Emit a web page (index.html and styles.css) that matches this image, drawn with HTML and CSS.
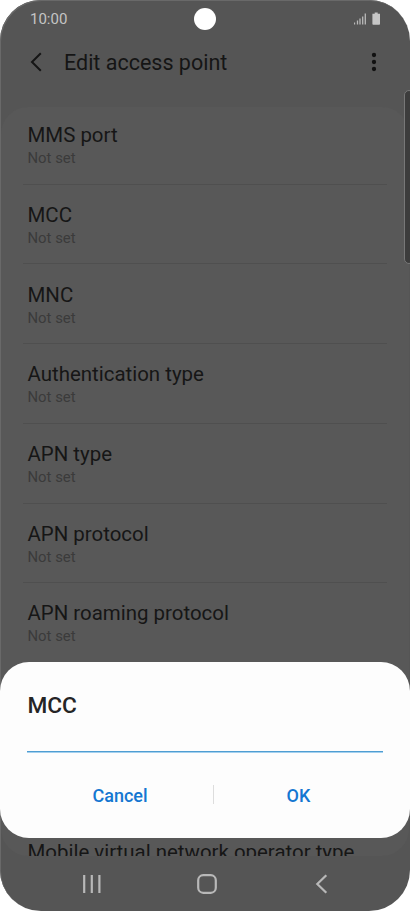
FILE: index.html
```html
<!DOCTYPE html>
<html lang="en">
<head>
<meta charset="utf-8">
<title>Edit access point</title>
<link rel="stylesheet" href="styles.css">
</head>
<body>
<div class="phone">
  <div class="status">
    <span class="time">10:00</span>
    <svg class="status-icons" width="28" height="14" viewBox="0 0 28 14">
      <path d="M.5 12.5v-2M3.5 12.5V8.5M6 12.5V6.5M8.7 12.5V4.5M11.3 12.5V1.5" class="signal"/>
      <path d="M20.7 .5h3v1.2H26v10.2a.8.8 0 0 1-.8.8h-6a.8.8 0 0 1-.8-.8V1.7h2.3z" class="fill"/>
    </svg>
  </div>
  <header class="header">
    <svg class="back" width="12" height="20" viewBox="0 0 12 20"><path d="M10.8 1.3 2 10l8.8 8.7"/></svg>
    <h1>Edit access point</h1>
    <svg class="more" width="6" height="20" viewBox="0 0 6 20"><circle cx="3" cy="3" r="2.15"/><circle cx="3" cy="10" r="2.15"/><circle cx="3" cy="17" r="2.15"/></svg>
  </header>
  <main class="card">
    <div class="row"><div class="name">MMS port</div><div class="value">Not set</div></div>
    <div class="row"><div class="name">MCC</div><div class="value">Not set</div></div>
    <div class="row"><div class="name">MNC</div><div class="value">Not set</div></div>
    <div class="row"><div class="name">Authentication type</div><div class="value">Not set</div></div>
    <div class="row"><div class="name">APN type</div><div class="value">Not set</div></div>
    <div class="row"><div class="name">APN protocol</div><div class="value">Not set</div></div>
    <div class="row"><div class="name">APN roaming protocol</div><div class="value">Not set</div></div>
    <div class="row"></div>
    <div class="row"></div>
    <div class="row"><div class="name">Mobile virtual network operator type</div></div>
  </main>
  <nav class="nav">
    <svg width="20" height="20" viewBox="0 0 20 20"><path d="M2.2 1v18M9.8 1v18M17.4 1v18"/></svg>
    <svg width="20" height="20" viewBox="0 0 20 20"><rect x="1.2" y="1.2" width="17.6" height="17.6" rx="5"/></svg>
    <svg width="20" height="20" viewBox="0 0 20 20"><path d="M15.3 1.3 6.3 10l9 8.7"/></svg>
  </nav>
  <div class="camera"></div>
  <div class="edge"></div>
  <section class="dialog">
    <h2>MCC</h2>
    <div class="field"></div>
    <div class="actions"><span>Cancel</span><i class="split"></i><span>OK</span></div>
  </section>
</div>
</body>
</html>
```
FILE: styles.css
```css
* { box-sizing: border-box; }
body { margin: 0; background: #fff; font-family: Roboto, sans-serif; }
.phone {
  position: relative;
  width: 410px;
  height: 911px;
  display: flex;
  flex-direction: column;
  overflow: hidden;
  border-radius: 41px;
  background: #555;
  box-shadow: inset 1px 1px 0 #696969;
}
.status {
  height: 38px;
  padding: 0 28px 0 30px;
  display: flex;
  align-items: center;
  justify-content: space-between;
}
.time { font-size: 15px; line-height: 18px; color: #c4c4c4; }
.signal { stroke: #b9b9b9; stroke-width: 1.3; fill: none; }
.fill { fill: #c6c6c6; }
.header {
  height: 69px;
  padding: 14px 33.5px 0 29px;
  display: flex;
  align-items: flex-start;
}
.back { margin: -0.5px 22px 0 1px; fill: none; stroke: #151515; stroke-width: 2; }
h1 { margin: -2px 0 0; flex: 1; font-size: 21.5px; line-height: 26px; font-weight: 400; color: #151515; }
.more { fill: #111; }
.card {
  height: 749px;
  margin: 0 1px;
  padding: 0 22px;
  overflow: hidden;
  border-radius: 27px;
  background: #585858;
}
.row { height: 79.7px; padding: 17.2px 4.5px 0; border-bottom: 1px solid #4f4f4f; }
.row:first-child { height: 77.8px; padding-top: 15.3px; }
.name { font-size: 20.45px; line-height: 26px; color: #161616; white-space: nowrap; }
.value { font-size: 14.9px; line-height: 21.8px; color: #3b3b3b; }
.nav {
  height: 55px;
  padding: 0 79px 0 82px;
  display: flex;
  align-items: center;
  justify-content: space-between;
}
.nav svg { fill: none; stroke: #b8b8b8; stroke-width: 2.2; }
.camera {
  position: absolute;
  left: 194px;
  top: 8px;
  width: 22px;
  height: 22px;
  border-radius: 50%;
  background: #fff;
}
.edge {
  position: absolute;
  left: 404px;
  top: 90px;
  width: 10px;
  height: 174px;
  border: 1px solid #777;
  border-radius: 5px;
  background: #3c3c3c;
}
.dialog {
  position: absolute;
  left: 0;
  top: 661.5px;
  width: 410px;
  height: 176.5px;
  padding: 30px 27px 0;
  border-radius: 29px;
  background: #fdfdfd;
}
h2 { margin: 0; padding-left: 0.4px; font-size: 22.7px; line-height: 28px; font-weight: 500; color: #252525; }
.field { height: 32.5px; border-bottom: 1px solid #4e9dd2; box-shadow: 0 1px 0 #a4d0ee; }
.actions { display: flex; align-items: center; height: 85px; }
.actions span { flex: 1; padding-top: 1px; text-align: center; font-size: 18px; font-weight: 500; color: #1477d1; }
.actions span:first-child { flex: 0 0 186px; }
.split { width: 1px; height: 19px; background: #ddd; }
```
